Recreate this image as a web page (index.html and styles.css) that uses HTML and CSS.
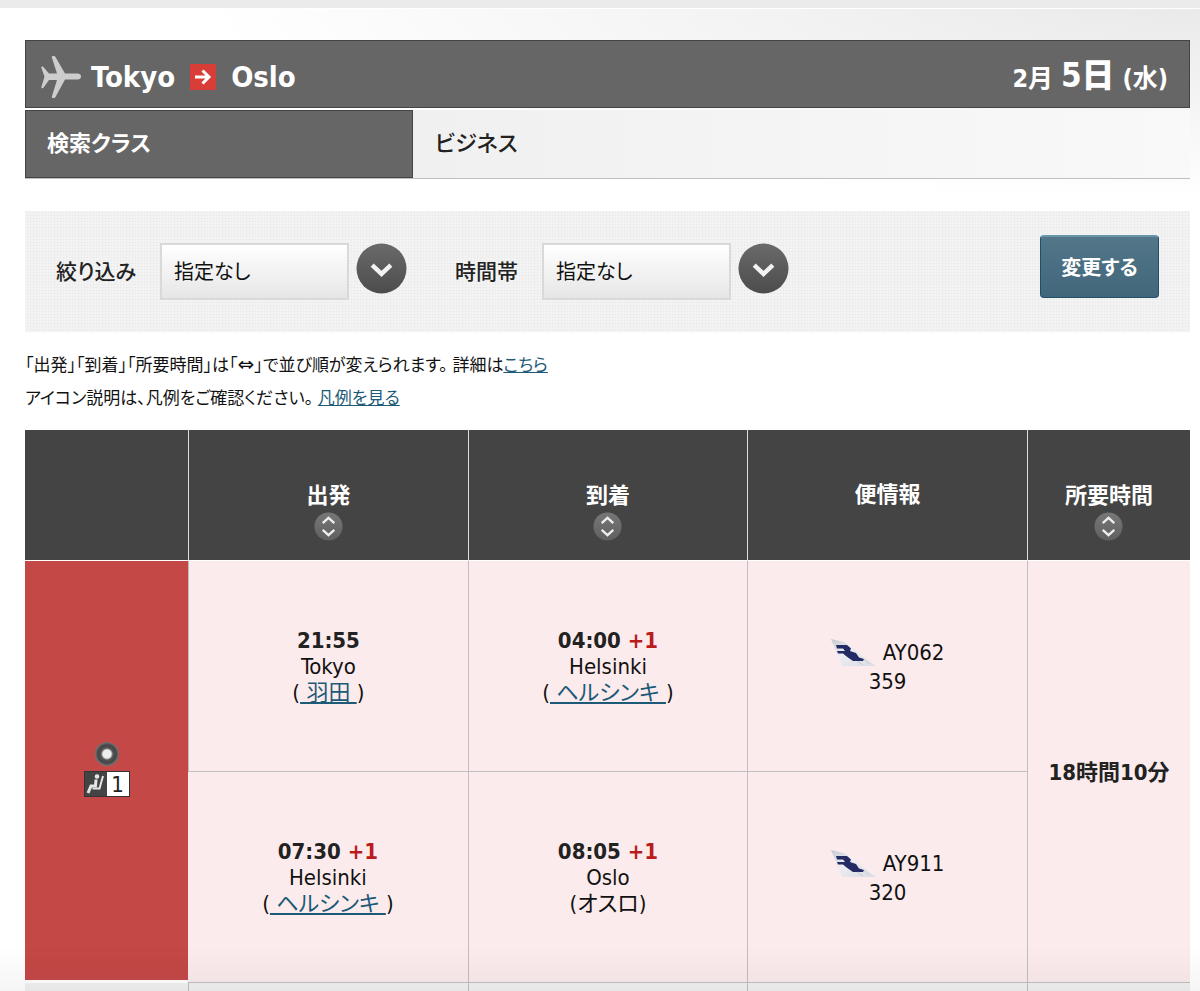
FILE: index.html
```html
<!DOCTYPE html>
<html lang="ja">
<head>
<meta charset="utf-8">
<meta name="viewport" content="width=device-width, initial-scale=1">
<title>Tokyo - Oslo</title>
<link rel="stylesheet" href="styles.css">
</head>
<body>
<svg class="defs" width="0" height="0" aria-hidden="true">
  <defs>
    <linearGradient id="disc" x1="0" y1="0" x2="0" y2="1"><stop offset="0" stop-color="#6a6a6a"/><stop offset="1" stop-color="#4c4c4c"/></linearGradient>
    <linearGradient id="sortDisc" x1="0" y1="0" x2="0" y2="1"><stop offset="0" stop-color="#777"/><stop offset="1" stop-color="#606060"/></linearGradient>
    <linearGradient id="tail" x1="0" y1="0" x2="1" y2="1"><stop offset="0" stop-color="#c4c8d0"/><stop offset=".4" stop-color="#eceef3"/><stop offset="1" stop-color="#dadce4"/></linearGradient>
    <symbol id="i-down" viewBox="0 0 52 52"><circle cx="26" cy="26" r="25.5" fill="url(#disc)"/><path d="M16.500 22.500l9.500 9 9.500-9" fill="none" stroke="#f2f2f2" stroke-width="4.500"/></symbol>
    <symbol id="i-sort" viewBox="0 0 30 30"><circle cx="15" cy="15" r="14.500" fill="url(#sortDisc)"/><path d="M9 11.500L15 6l6 5.500M9 18.500l6 5.500 6-5.500" fill="none" stroke="#eee" stroke-width="2.400"/></symbol>
    <symbol id="i-tail" viewBox="0 0 46 28"><path d="M0 0L13 3C25 11 36 21 45 27H11Z" fill="url(#tail)"/><path d="M5 6H16L20 9.500L19 12L25 14L28 18.500L33 20L32 22H22L17 18.500L15 17L12 14.500H7L6 12H14L12 9.500H6Z" fill="#232a64"/><path d="M33 20l5 5M26 22l6 4" stroke="#c6c9d2"/></symbol>
  </defs>
</svg>
<main class="page">
  <header class="route">
    <h1 class="route-name">
      <svg class="plane" viewBox="0 0 40 42" aria-hidden="true"><path d="M11.500 0Q13.500-.5 14.500 1l9.500 16.500H36.500q3.500 0 3.500 3t-3.500 3H24L14.500 41q-1 1.500-3 1Q10.500 42 11 40L16 24H8l-5 7q-1 1.500-2 1.200Q0 32 .4 31L3.500 20.500 .4 12Q0 10.800 1 10.500q1-.2 2 1.200L8 17.500h8L11 2Q10.500 .5 11.500 0z" fill="#cdcdcd"/></svg>
      <span>Tokyo</span>
      <svg class="arrow" viewBox="0 0 26 26" aria-hidden="true"><rect width="26" height="26" fill="#d83d38"/><path d="M5 13h14M12.500 6.500L19 13l-6.500 6.500" fill="none" stroke="#fff" stroke-width="3"/></svg>
      <span>Oslo</span>
    </h1>
    <p class="date">2月 <strong>5日</strong> (水)</p>
  </header>
  <dl class="cabin"><dt>検索クラス</dt><dd>ビジネス</dd></dl>

  <form class="filter">
    <div class="field"><label for="refine">絞り込み</label><select id="refine"><option>指定なし</option></select><svg class="disc" aria-hidden="true"><use href="#i-down"/></svg></div>
    <div class="field"><label for="time">時間帯</label><select id="time"><option>指定なし</option></select><svg class="disc" aria-hidden="true"><use href="#i-down"/></svg></div>
    <button class="change" type="button">変更する</button>
  </form>

  <div class="notes">
    <p>「出発」「到着」「所要時間」は「<span class="both">⇔</span>」で並び順が変えられます。 詳細は<a href="#">こちら</a></p>
    <p>アイコン説明は、凡例をご確認ください。 <a href="#">凡例を見る</a></p>
  </div>

  <table class="flights">
    <colgroup><col class="c-side"><col class="c-main"><col class="c-main"><col class="c-main"><col></colgroup>
    <thead>
      <tr>
        <td></td>
        <th scope="col">出発<button class="sort" type="button" aria-label="出発で並べ替え"><svg aria-hidden="true"><use href="#i-sort"/></svg></button></th>
        <th scope="col">到着<button class="sort" type="button" aria-label="到着で並べ替え"><svg aria-hidden="true"><use href="#i-sort"/></svg></button></th>
        <th scope="col" class="plain">便情報</th>
        <th scope="col">所要時間<button class="sort" type="button" aria-label="所要時間で並べ替え"><svg aria-hidden="true"><use href="#i-sort"/></svg></button></th>
      </tr>
    </thead>
    <tbody>
      <tr>
        <td class="pick" rowspan="2">
          <input class="radio" type="radio" name="flight" aria-label="この便を選択" checked>
          <div class="seat"><svg viewBox="0 0 22 24" aria-hidden="true"><circle cx="12" cy="4.500" r="2.300" fill="#e6e6e6"/><path d="M11 7.500L10.500 14H6L3 21" fill="none" stroke="#e6e6e6" stroke-width="3"/><path d="M18 4L14.500 16.500H7.500" fill="none" stroke="#e6e6e6" stroke-width="2"/></svg><span>1</span></div>
        </td>
        <td><b>21:55</b><br>Tokyo<br>(<a href="#">&nbsp;羽田&nbsp;</a>)</td>
        <td><b>04:00 <em>+1</em></b><br>Helsinki<br>(<a href="#">&nbsp;ヘルシンキ&nbsp;</a>)</td>
        <td class="info"><div class="code"><svg aria-hidden="true"><use href="#i-tail"/></svg>AY062</div>359</td>
        <td class="total" rowspan="2">18時間10分</td>
      </tr>
      <tr>
        <td><b>07:30 <em>+1</em></b><br>Helsinki<br>(<a href="#">&nbsp;ヘルシンキ&nbsp;</a>)</td>
        <td><b>08:05 <em>+1</em></b><br>Oslo<br>(オスロ)</td>
        <td class="info"><div class="code"><svg aria-hidden="true"><use href="#i-tail"/></svg>AY911</div>320</td>
      </tr>
      <tr class="next"><td></td><td></td><td></td><td></td><td></td></tr>
    </tbody>
  </table>
</main>
<div class="fade"></div>
</body>
</html>
```
FILE: styles.css
```css
* { box-sizing: border-box; }

body {
  margin: 0;
  color: #222;
  font: 22px/26px "DejaVu Sans Condensed", "Noto Sans CJK JP", sans-serif;
  font-feature-settings: "palt";
  background: radial-gradient(ellipse 1000px 200px at 100% 0, #e9e9e9, #f4f4f4 50%, #fff) no-repeat, #fff;
  border-top: 8px solid #ebebeb;
}

.defs { position: absolute; }
h1, p, dl, dd { margin: 0; }
a { color: #1c5a78; }

.page {
  padding: 31px 10px 0 25px;
  border-top: 1px solid #fff;
  overflow: hidden;
}

.route {
  display: flex;
  justify-content: space-between;
  align-items: center;
  height: 68px;
  padding: 6px 21px 0 15px;
  background: #666;
  border: 1px solid #444;
  color: #fff;
  font-weight: bold;
}

.route-name {
  display: flex;
  align-items: center;
  font-size: 29px;
  line-height: 36px;
}

.plane { width: 40px; height: 42px; margin-right: 10px; }
.arrow { width: 26px; height: 26px; margin: 0 15px; }
.date { font-size: 25px; line-height: 40px; }
.date strong { font-size: 33px; }

.cabin { display: flex; margin-top: 2px; border-bottom: 1px solid #c0c0c0; font-weight: 500; }

.cabin dt {
  width: 33.3%;
  height: 68px;
  padding: 20px 21px;
  background: #666;
  border: 1px solid #444;
  color: #fff;
  font-weight: bold;
}

.cabin dd { flex: 1; padding: 21px 22px; background: linear-gradient(90deg, #f0f0f0, #f9f9f9); }

.filter {
  display: flex;
  align-items: flex-start;
  margin-top: 32px;
  height: 121px;
  padding: 24px 31px;
  background-color: #f4f4f4;
  background-image:
    repeating-linear-gradient(0deg, transparent 0 2px, rgba(0, 0, 0, .02) 2px 3px),
    repeating-linear-gradient(90deg, transparent 0 2px, rgba(0, 0, 0, .02) 2px 3px);
}

.field { display: flex; align-items: flex-start; padding-top: 8px; margin-right: 48px; font-size: 21px; font-weight: 500; }
.field label { padding-top: 16px; margin-right: 24px; }

.field select {
  appearance: none;
  width: 189px;
  height: 57px;
  padding: 0 12px;
  border: 2px solid #d9d9d9;
  border-radius: 0;
  background: linear-gradient(#fff, #e6e6e6);
  color: #111;
  font: 20px/26px "DejaVu Sans Condensed", "Noto Sans CJK JP", sans-serif;
  font-feature-settings: "palt";
}

.disc { width: 51px; height: 51px; margin-left: 7px; }

.change {
  width: 119px;
  height: 63px;
  margin-left: auto;
  padding: 0;
  border: 1px solid #1f506b;
  border-top: 2px solid #6795a8;
  border-radius: 4px;
  background: linear-gradient(#537789, #42667a);
  color: #fff;
  font: bold 20px/26px "Noto Sans CJK JP", sans-serif;
  font-feature-settings: "palt";
}

.notes { padding: 17px 0 15px; font-size: 17px; line-height: 33px; color: #111; }
.both { font-family: "DejaVu Sans", sans-serif; font-size: 20px; line-height: 20px; }

.flights { width: 100%; table-layout: fixed; border-spacing: 0; text-align: center; }
.c-side { width: 14%; }
.c-main { width: 24%; }
.flights td, .flights th { padding: 2px 0 0; border-left: 1px solid #bfbfbf; }
.flights td:first-child { border-left: 0; }

.flights thead td, .flights thead th {
  height: 131px;
  padding-top: 33px;
  background: #444;
  border-color: #ddd;
  border-bottom: 1px solid #fff;
  color: #fff;
}

.flights .plain { padding-top: 0; }

.sort {
  display: block;
  width: 29px;
  height: 29px;
  margin: 3px auto 0;
  padding: 0;
  border: 0;
  background: none;
}

.sort svg { display: block; width: 29px; height: 29px; }

.flights tbody td { height: 211px; background: #fcebec; border-bottom: 1px solid #bfbfbf; color: #111; }
.flights b { color: #222; }
.flights em { font-style: normal; color: #b91c1c; }

.flights tbody .pick {
  padding: 0 0 3px;
  background: #c44846;
  border-bottom: 3px solid #fff;
}

.radio {
  display: block;
  appearance: none;
  width: 24px;
  height: 24px;
  margin: 0 auto 5px;
  border-radius: 50%;
  background: radial-gradient(circle, #eee 4px, #555 6px, #444 9px, #777 12px);
}

.seat {
  display: flex;
  width: 46px;
  height: 26px;
  margin: 0 auto;
  border: 1px solid #333;
  background: #444;
  color: #222;
}

.seat svg { width: 22px; height: 24px; }
.seat span { flex: 1; background: #fff; line-height: 25px; }

.code { display: flex; justify-content: center; align-items: center; line-height: 29px; }
.code svg { width: 46px; height: 28px; margin-right: 6px; }
.info { line-height: 29px; }
.flights .total { color: #222; font-weight: bold; }
.flights .next td { height: 8px; background: #f1f1f1; border-bottom: 0; }

.fade {
  position: fixed;
  inset: auto 0 0;
  height: 45px;
  pointer-events: none;
  background: linear-gradient(transparent, rgba(0, 0, 0, .04));
}
```
